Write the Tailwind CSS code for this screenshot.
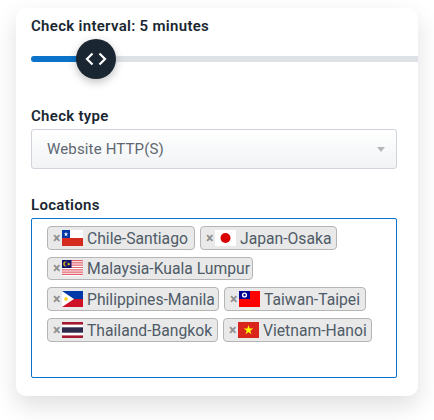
<!DOCTYPE html>
<html lang="en">
<head>
    <meta charset="UTF-8">
    <title>Check settings</title>
    <script src="https://cdn.jsdelivr.net/npm/@tailwindcss/browser@4"></script>
</head>
<body class="bg-white font-['Roboto',sans-serif] w-[434px] h-[420px] overflow-hidden">
    <div class="mt-2 ml-4 w-[402px] h-[388px] bg-white rounded-[10px] shadow-[0_10px_24px_rgba(0,0,0,0.13)] pl-[15px] overflow-hidden">
        <h3 class="pt-[9px] h-[31px] text-[15px] leading-[18px] font-semibold text-[#1a2732] tracking-[0.3px]">Check interval: 5 minutes</h3>

        <div class="relative h-10 flex items-center">
            <div class="w-full h-1.5 bg-[#dee2e6] rounded-l-full flex">
                <div class="w-[50px] bg-[#0b73c9] rounded-l-full"></div>
            </div>
            <div class="absolute left-[45px] top-0 w-10 h-10 rounded-full bg-[#1a2732] shadow-[0_3px_8px_rgba(0,0,0,0.25)] flex items-center justify-center">
                <svg width="22" height="14" viewBox="0 0 22 14" fill="none" stroke="#fff" stroke-width="2.2"><path d="M7.5 1.5 2 7l5.5 5.5M14.5 1.5 20 7l-5.5 5.5"/></svg>
            </div>
        </div>

        <h3 class="mt-[27px] h-[19px] text-[15px] leading-[20px] font-semibold text-[#1a2732] tracking-[0.3px]">Check type</h3>
        <div class="mt-1 w-[366px] h-10 border border-[#ced4da] rounded-[3px] bg-gradient-to-b from-white to-[#f1f3f5] flex items-center justify-between pl-[15px] pr-[11px] text-[15px] text-[#5f6870] tracking-[0.15px]">
            <span>Website HTTP(S)</span>
            <span class="w-0 h-0 border-x-4 border-x-transparent border-t-[5px] border-t-[#b4b8bc]"></span>
        </div>

        <h3 class="mt-[26px] h-[19px] text-[15px] leading-[20px] font-semibold text-[#1a2732] tracking-[0.3px]">Locations</h3>
        <div class="mt-1 w-[366px] h-40 border border-[#0b73c9] rounded-[2px] pt-[7px] pl-[15px] pr-2 flex flex-wrap content-start gap-x-[5px] gap-y-[7px] text-[15.7px] text-[#4f5b67]">
            <div class="h-[23.67px] w-[148px] flex items-center border border-[#b5b5b5] rounded-[4px] bg-[#e9e9e9] pl-[5px] whitespace-nowrap">
                <span class="w-2 shrink-0 text-[14px] font-bold text-[#8f8f8f] leading-none">×</span>
                <svg class="shrink-0 ml-[1px] mr-1" width="21" height="16" viewBox="0 0 21 16"><rect width="21" height="16" fill="#fff"/><rect y="8" width="21" height="8" fill="#d52b1e"/><rect width="8" height="8" fill="#0039a6"/><path d="m4 2 .6 1.6h1.6l-1.3 1 .5 1.6-1.400-1-1.400 1 .5-1.600-1.300-1h1.600z" fill="#fff"/></svg>
                <span class="pt-px">Chile-Santiago</span>
            </div>
            <div class="h-[23.67px] w-[137px] flex items-center border border-[#b5b5b5] rounded-[4px] bg-[#e9e9e9] pl-[5px] whitespace-nowrap">
                <span class="w-2 shrink-0 text-[14px] font-bold text-[#8f8f8f] leading-none">×</span>
                <svg class="shrink-0 ml-[1px] mr-1" width="21" height="16" viewBox="0 0 21 16"><rect width="21" height="16" fill="#fff"/><circle cx="10.5" cy="8" r="5" fill="#d80000"/></svg>
                <span class="pt-px">Japan-Osaka</span>
            </div>
            <div class="h-[23.67px] w-[206px] flex items-center border border-[#b5b5b5] rounded-[4px] bg-[#e9e9e9] pl-[5px] whitespace-nowrap">
                <span class="w-2 shrink-0 text-[14px] font-bold text-[#8f8f8f] leading-none">×</span>
                <svg class="shrink-0 ml-[1px] mr-1" width="21" height="16" viewBox="0 0 21 16"><rect width="21" height="16" fill="#fff"/><path d="M0 0h21v1.2H0zM0 2.3h21v1.2H0zM0 4.6h21v1.2H0zM0 6.9h21v1.2H0zM0 9.2h21v1.2H0zM0 11.5h21v1.2H0zM0 13.8h21V15H0z" fill="#e0606a"/><rect width="9.5" height="8" fill="#10106e"/><circle cx="3.6" cy="4" r="2.4" fill="#fc0"/><circle cx="4.5" cy="4" r="2" fill="#10106e"/><path d="m6.8 2.3.4 1.1 1.100-.2-.7.9.7.9-1.100-.3-.4 1.100-.4-1.100-1.100.3.7-.9-.7-.9 1.100.2z" fill="#fc0"/></svg>
                <span class="pt-px">Malaysia-Kuala Lumpur</span>
            </div>
            <div class="h-[23.67px] w-[172px] flex items-center border border-[#b5b5b5] rounded-[4px] bg-[#e9e9e9] pl-[5px] whitespace-nowrap">
                <span class="w-2 shrink-0 text-[14px] font-bold text-[#8f8f8f] leading-none">×</span>
                <svg class="shrink-0 ml-[1px] mr-1" width="21" height="16" viewBox="0 0 21 16"><rect width="21" height="8" fill="#0038a8"/><rect y="8" width="21" height="8" fill="#ce1126"/><path d="M0 0 12 8 0 16z" fill="#fff"/><circle cx="4" cy="8" r="1.8" fill="#fcd116"/></svg>
                <span class="pt-px">Philippines-Manila</span>
            </div>
            <div class="h-[23.67px] w-[142px] flex items-center border border-[#b5b5b5] rounded-[4px] bg-[#e9e9e9] pl-[5px] whitespace-nowrap">
                <span class="w-2 shrink-0 text-[14px] font-bold text-[#8f8f8f] leading-none">×</span>
                <svg class="shrink-0 ml-[1px] mr-1" width="21" height="16" viewBox="0 0 21 16"><rect width="21" height="16" fill="#f00"/><rect width="11" height="8" fill="#000095"/><circle cx="5.5" cy="4" r="2.6" fill="#fff"/><circle cx="5.5" cy="4" r="1.2" fill="#000095"/></svg>
                <span class="pt-px">Taiwan-Taipei</span>
            </div>
            <div class="h-[23.67px] w-[171px] flex items-center border border-[#b5b5b5] rounded-[4px] bg-[#e9e9e9] pl-[5px] whitespace-nowrap">
                <span class="w-2 shrink-0 text-[14px] font-bold text-[#8f8f8f] leading-none">×</span>
                <svg class="shrink-0 ml-[1px] mr-1" width="21" height="16" viewBox="0 0 21 16"><rect width="21" height="16" fill="#fff"/><rect width="21" height="2.6" fill="#a51931"/><rect y="13.4" width="21" height="2.6" fill="#a51931"/><rect y="5.3" width="21" height="5.4" fill="#2d2a4a"/></svg>
                <span class="pt-px">Thailand-Bangkok</span>
            </div>
            <div class="h-[23.67px] w-[149px] flex items-center border border-[#b5b5b5] rounded-[4px] bg-[#e9e9e9] pl-[5px] whitespace-nowrap">
                <span class="w-2 shrink-0 text-[14px] font-bold text-[#8f8f8f] leading-none">×</span>
                <svg class="shrink-0 ml-[1px] mr-1" width="21" height="16" viewBox="0 0 21 16"><rect width="21" height="16" fill="#da251d"/><path d="m10.5 3 1.1 3.5h3.700l-3 2.200 1.100 3.500-2.900-2.200-2.900 2.200 1.100-3.500-3-2.200h3.700z" fill="#ff0"/></svg>
                <span class="pt-px">Vietnam-Hanoi</span>
            </div>
        </div>
    </div>
</body>
</html>
